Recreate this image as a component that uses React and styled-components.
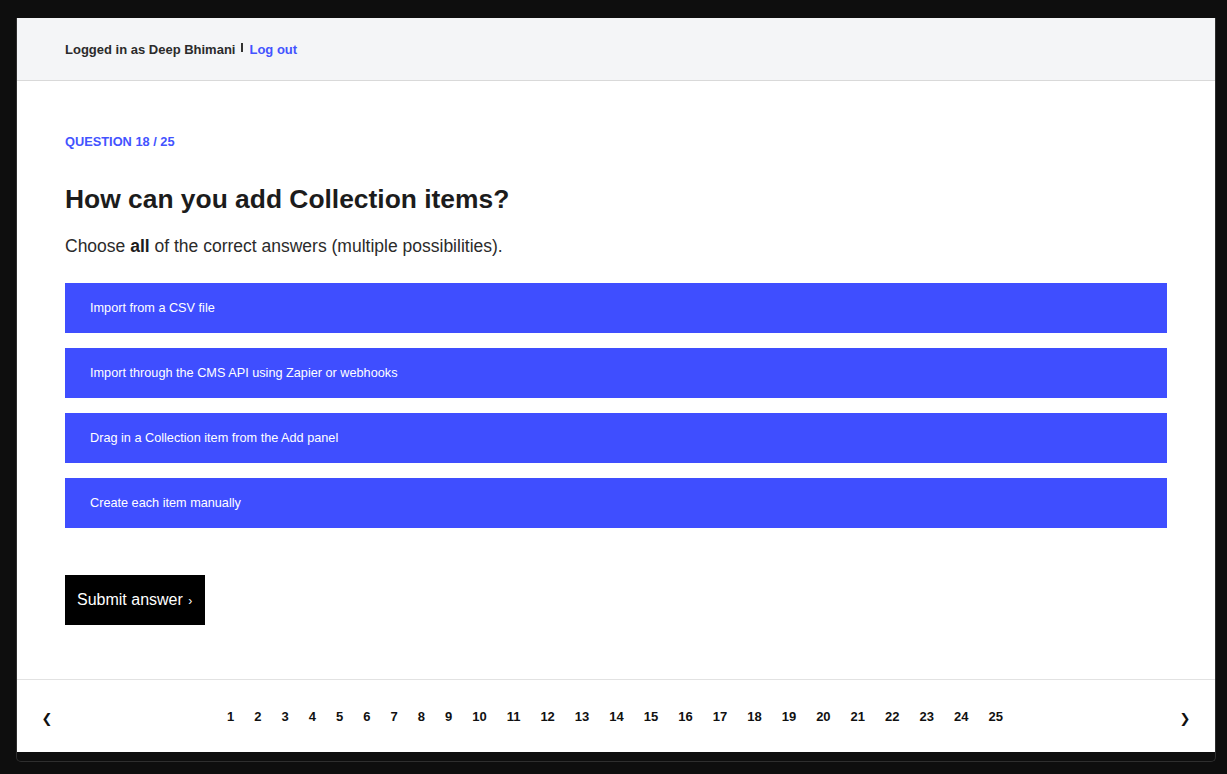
import React from "react";
import styled, { createGlobalStyle } from "styled-components";

const Global = createGlobalStyle`
  html, body { margin: 0; padding: 0; background: #0e0e0e; }
  body { font-family: "Liberation Sans", Arial, sans-serif; }
  * { box-sizing: border-box; }
`;

const Stage = styled.div`
  padding: 18px 11px 0 16px;
  height: 774px;
`;

const Frame = styled.div`
  width: 1200px;
  height: 744px;
  border: 1px solid #2e2e2e;
  border-top: none;
  border-radius: 0 0 5px 5px;
  background: #0e0e0e;
  padding-bottom: 9px;
  display: flex;
  flex-direction: column;
`;

const Window = styled.div`
  flex: 1;
  background: #fff;
  display: flex;
  flex-direction: column;
`;

const Header = styled.header`
  height: 63px;
  background: #f4f5f7;
  border-bottom: 1px solid #d9d9d9;
  display: flex;
  align-items: center;
  padding: 0 48px;
  font-size: 13px;
  font-weight: 700;
  color: #2b2b2b;
`;

const Divider = styled.span`
  display: inline-block;
  width: 2px;
  height: 9px;
  background: #333;
  margin: 0 6px 3px 6px;
`;

const LogOut = styled.a`
  color: #4353ff;
  text-decoration: none;
  cursor: pointer;
`;

const Main = styled.main`
  flex: 1;
  padding: 54px 48px 0 48px;
  border-bottom: 1px solid #e2e2e2;
`;

const Eyebrow = styled.div`
  color: #4353ff;
  font-size: 12.8px;
  font-weight: 700;
  line-height: 14px;
`;

const Title = styled.h1`
  margin: 34px 0 0 0;
  font-size: 26.4px;
  line-height: 32px;
  font-weight: 700;
  color: #1c1c1c;
`;

const Lead = styled.p`
  margin: 19px 0 0 0;
  font-size: 17.5px;
  line-height: 24px;
  color: #2b2b2b;
  b { font-weight: 700; color: #1c1c1c; }
`;

const Options = styled.div`
  margin-top: 25px;
  display: flex;
  flex-direction: column;
  gap: 15px;
`;

const Option = styled.button`
  height: 50px;
  background: #3f4eff;
  color: #fff;
  border: none;
  text-align: left;
  padding: 0 25px;
  font-family: "Liberation Sans", Arial, sans-serif;
  font-size: 12.7px;
  cursor: pointer;
`;

const Submit = styled.button`
  margin-top: 47px;
  height: 50px;
  background: #000;
  color: #fff;
  border: none;
  font-family: "Liberation Sans", Arial, sans-serif;
  font-size: 16px;
  padding: 0 13px 0 12px;
  white-space: nowrap;
  cursor: pointer;
  span { font-size: 12px; margin-left: 1px; }
`;

const Footer = styled.footer`
  height: 72px;
  display: flex;
  align-items: center;
  justify-content: space-between;
  padding: 0 24px 0 24px;
`;

const Arrow = styled.button`
  background: none;
  border: none;
  width: 12px;
  font-family: "DejaVu Sans", sans-serif;
  font-size: 13px;
  font-weight: 700;
  color: #111;
  padding: 0;
  margin: 5px 0 0 0;
  cursor: pointer;
`;

const Pages = styled.nav`
  display: flex;
  align-items: center;
  margin-right: 2px;
`;

const Page = styled.a`
  padding: 0 10px;
  font-size: 13px;
  font-weight: 700;
  color: #111;
  cursor: pointer;
`;

const answers = [
  "Import from a CSV file",
  "Import through the CMS API using Zapier or webhooks",
  "Drag in a Collection item from the Add panel",
  "Create each item manually",
];

export default function App() {
  return (
    <>
      <Global />
      <Stage>
        <Frame>
          <Window>
            <Header>
              Logged in as Deep Bhimani
              <Divider />
              <LogOut>Log out</LogOut>
            </Header>
            <Main>
              <Eyebrow>QUESTION 18 / 25</Eyebrow>
              <Title>How can you add Collection items?</Title>
              <Lead>
                Choose <b>all</b> of the correct answers (multiple possibilities).
              </Lead>
              <Options>
                {answers.map((a) => (
                  <Option key={a}>{a}</Option>
                ))}
              </Options>
              <Submit>
                Submit answer <span>›</span>
              </Submit>
            </Main>
            <Footer>
              <Arrow>❮</Arrow>
              <Pages>
                {Array.from({ length: 25 }, (_, i) => (
                  <Page key={i}>{i + 1}</Page>
                ))}
              </Pages>
              <Arrow>❯</Arrow>
            </Footer>
          </Window>
        </Frame>
      </Stage>
    </>
  );
}
